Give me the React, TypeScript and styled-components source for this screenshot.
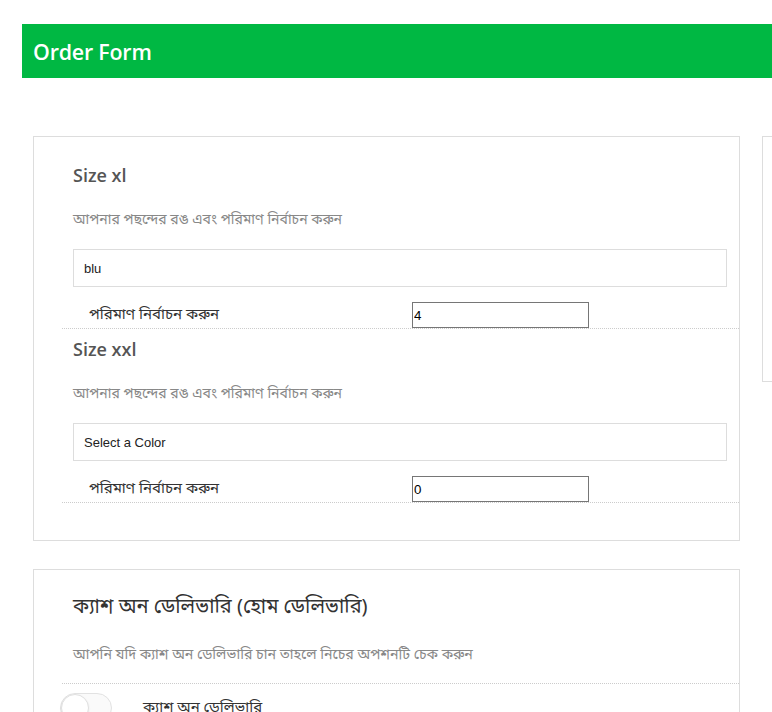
import React from "react";
import styled, { createGlobalStyle } from "styled-components";

const GlobalStyle = createGlobalStyle`
  html, body {
    margin: 0;
    padding: 0;
    overflow: hidden;
    background: #ffffff;
  }
  body {
    font-family: "Open Sans", "Noto Sans Bengali", "Noto Sans", sans-serif;
  }
  * { box-sizing: border-box; }
`;

const bn = `"Noto Sans Bengali", "Noto Serif Bengali", "Lohit Bengali", "Noto Sans", sans-serif`;

const Page = styled.div`
  width: 1200px;
  padding: 24px 0 0 22px;
`;

const Header = styled.header`
  height: 54px;
  background: #00b843;
  display: flex;
  align-items: center;
  padding-left: 11px;
`;

const Title = styled.h1`
  margin: 0;
  font-family: "Open Sans", sans-serif;
  font-size: 21.4px;
  font-weight: 600;
  color: #ffffff;
  letter-spacing: -0.2px;
`;

const Main = styled.main`
  display: flex;
  gap: 22px;
  margin-top: 58px;
  padding-left: 11px;
  align-items: flex-start;
`;

const LeftColumn = styled.div`
  width: 707px;
  display: flex;
  flex-direction: column;
  gap: 28px;
`;

const Card = styled.section<{ $pt: number; $pb: number }>`
  border: 1px solid #dddddd;
  background: #ffffff;
  padding: ${(p) => p.$pt}px 0 ${(p) => p.$pb}px 28px;
`;

const SideCard = styled.aside`
  width: 320px;
  height: 246px;
  border: 1px solid #dddddd;
`;

const SizeBlock = styled.div`
  padding-top: 8px;
`;

const SizeTitle = styled.h3`
  margin: 0 0 0 11px;
  font-family: "Open Sans", sans-serif;
  font-size: 18px;
  line-height: 24px;
  font-weight: 600;
  color: #555555;
`;

const Hint = styled.p<{ $mt: number; $size: number }>`
  margin: ${(p) => p.$mt}px 0 0 11px;
  font-family: ${bn};
  font-size: ${(p) => p.$size}px;
  line-height: 20px;
  color: #888888;
`;

const ColorSelect = styled.select`
  display: block;
  appearance: none;
  -webkit-appearance: none;
  margin: 18px 12px 0 11px;
  width: calc(100% - 23px);
  height: 38px;
  border: 1px solid #dddddd;
  border-radius: 0;
  background: #ffffff;
  padding: 0 10px;
  font-family: "Liberation Sans", Arial, sans-serif;
  font-size: 13px;
  color: #222222;
  outline: none;
`;

const QtyRow = styled.div`
  display: grid;
  grid-template-columns: 350px 177px;
  align-items: center;
  margin-top: 15px;
  border-bottom: 1px dotted #cccccc;
`;

const QtyLabel = styled.label`
  padding-left: 27px;
  font-family: ${bn};
  font-size: 15px;
  color: #333333;
`;

const QtyInput = styled.input`
  width: 177px;
  height: 26px;
  border: 1px solid #767676;
  border-radius: 0;
  padding: 0 1px;
  font-family: "Liberation Sans", Arial, sans-serif;
  font-size: 13.33px;
  color: #000000;
  background: #ffffff;
  outline: none;
`;

const CodTitle = styled.h3`
  margin: 0 0 0 11px;
  font-family: ${bn};
  font-size: 20px;
  line-height: 28px;
  font-weight: 400;
  color: #333333;
`;

const OptionRow = styled.div`
  margin-top: 17px;
  border-top: 1px dotted #cccccc;
  padding-top: 9px;
  display: flex;
  align-items: center;
  gap: 31px;
`;

const Toggle = styled.span`
  flex: none;
  margin-left: -2px;
  width: 52px;
  height: 30px;
  border-radius: 15px;
  border: 1px solid #e2e2e2;
  background: #fafafa;
  position: relative;
`;

const Knob = styled.span`
  position: absolute;
  left: 0;
  top: 0;
  width: 28px;
  height: 28px;
  border-radius: 50%;
  background: #ffffff;
  border: 1px solid #e0e0e0;
  box-shadow: 0 1px 2px rgba(0, 0, 0, 0.08);
`;

const OptionLabel = styled.span`
  font-family: ${bn};
  font-size: 15px;
  color: #333333;
`;

type Size = { name: string; color: string; qty: string };

const sizes: Size[] = [
  { name: "Size xl", color: "blu", qty: "4" },
  { name: "Size xxl", color: "Select a Color", qty: "0" },
];

export default function App() {
  return (
    <>
      <GlobalStyle />
      <Page>
        <Header>
          <Title>Order Form</Title>
        </Header>
        <Main>
          <LeftColumn>
            <Card $pt={18} $pb={37}>
              {sizes.map((s) => (
                <SizeBlock key={s.name}>
                  <SizeTitle>{s.name}</SizeTitle>
                  <Hint $mt={24} $size={14}>আপনার পছন্দের রঙ এবং পরিমাণ নির্বাচন করুন</Hint>
                  <ColorSelect defaultValue={s.color}>
                    <option value={s.color}>{s.color}</option>
                  </ColorSelect>
                  <QtyRow>
                    <QtyLabel>পরিমাণ নির্বাচন করুন</QtyLabel>
                    <QtyInput type="text" defaultValue={s.qty} />
                  </QtyRow>
                </SizeBlock>
              ))}
            </Card>
            <Card $pt={24} $pb={20}>
              <CodTitle>ক্যাশ অন ডেলিভারি (হোম ডেলিভারি)</CodTitle>
              <Hint $mt={24} $size={14.2}>আপনি যদি ক্যাশ অন ডেলিভারি চান তাহলে নিচের অপশনটি চেক করুন</Hint>
              <OptionRow>
                <Toggle>
                  <Knob />
                </Toggle>
                <OptionLabel>ক্যাশ অন ডেলিভারি</OptionLabel>
              </OptionRow>
            </Card>
          </LeftColumn>
          <SideCard />
        </Main>
      </Page>
    </>
  );
}
